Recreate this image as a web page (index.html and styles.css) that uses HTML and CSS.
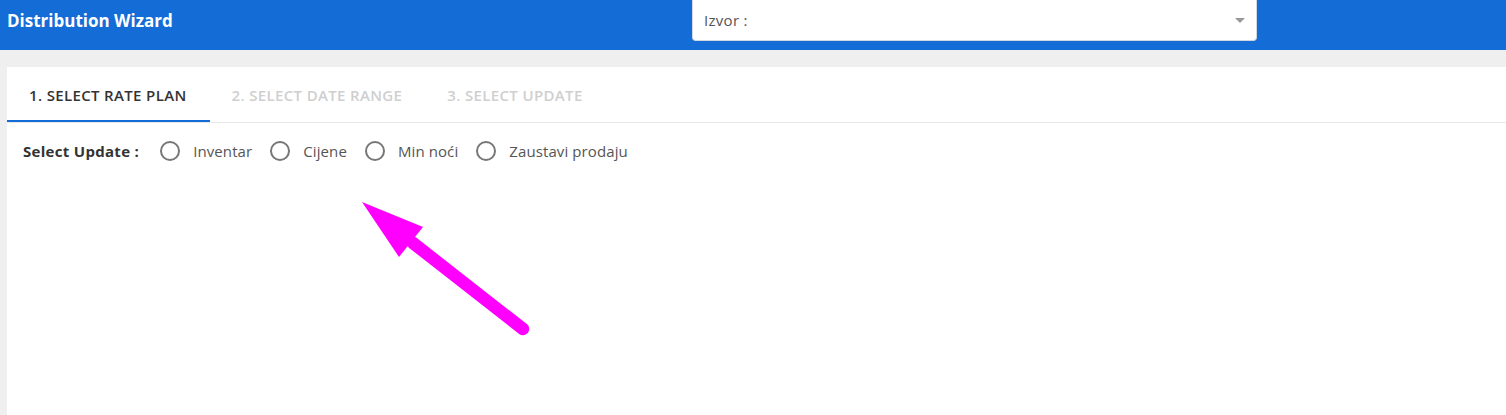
FILE: index.html
```html
<!DOCTYPE html>
<html lang="hr">
<head>
<meta charset="utf-8">
<title>Distribution Wizard</title>
<link rel="stylesheet" href="styles.css">
</head>
<body>
<header class="topbar">
  <div class="title">Distribution Wizard</div>
  <div class="select">
    <span class="select-label">Izvor :</span>
    <span class="caret"></span>
  </div>
</header>
<main class="page">
  <section class="card">
    <nav class="tabs">
      <div class="tab active">1. SELECT RATE PLAN</div>
      <div class="tab">2. SELECT DATE RANGE</div>
      <div class="tab">3. SELECT UPDATE</div>
    </nav>
    <div class="update-row">
      <span class="update-label">Select Update :</span>
      <label class="radio"><span class="circle"></span><span class="radio-text">Inventar</span></label>
      <label class="radio"><span class="circle"></span><span class="radio-text">Cijene</span></label>
      <label class="radio"><span class="circle"></span><span class="radio-text">Min noći</span></label>
      <label class="radio"><span class="circle"></span><span class="radio-text">Zaustavi prodaju</span></label>
    </div>
  </section>
</main>
<svg class="annotation" width="1506" height="415" viewBox="0 0 1506 415" aria-hidden="true">
  <line x1="413" y1="243" x2="523" y2="329" stroke="#ff00ff" stroke-width="12.5" stroke-linecap="round"/>
  <polygon points="362,202 423,227 399,257" fill="#ff00ff"/>
</svg>
</body>
</html>
```
FILE: styles.css
```css
html, body {
  margin: 0;
  padding: 0;
  height: 100%;
}
body {
  font-family: "Open Sans", "Noto Sans", sans-serif;
  background: #efefef;
  overflow: hidden;
  position: relative;
}
.topbar {
  height: 50px;
  background: #146cd7;
  display: grid;
  grid-template-columns: 692px 565px 1fr;
  align-items: start;
}
.title {
  color: #fff;
  font-weight: 700;
  font-size: 17px;
  line-height: 42px;
  padding-left: 7px;
}
.select {
  grid-column: 2;
  height: 40px;
  background: #fff;
  border: 1px solid #d3d8e0;
  border-top: 0;
  border-radius: 0 0 4px 4px;
  display: flex;
  align-items: center;
  justify-content: space-between;
  padding: 0 11px 0 11px;
  box-sizing: content-box;
  width: calc(565px - 22px - 2px);
}
.select-label {
  color: #555;
  font-size: 15px;
  letter-spacing: 0.3px;
}
.caret {
  width: 0;
  height: 0;
  border-left: 5px solid transparent;
  border-right: 5px solid transparent;
  border-top: 5px solid #999;
}
.page {
  padding: 17px 0 0 7px;
  height: calc(100% - 67px);
}
.card {
  background: #fff;
  height: 100%;
}
.tabs {
  display: flex;
  border-bottom: 1px solid #e8e8e8;
}
.tab {
  font-size: 15px;
  font-weight: 600;
  line-height: 20px;
  padding: 18px 23px 15px 22px;
  color: #cfcfcf;
  border-bottom: 2px solid transparent;
  letter-spacing: 0.35px;
}
.tab.active {
  color: #333;
  border-bottom-color: #146cd7;
}
.update-row {
  display: flex;
  align-items: center;
  padding: 18px 0 0 16px;
  font-size: 15px;
}
.update-label {
  font-weight: 700;
  color: #333;
  margin-right: 21px;
  letter-spacing: 0.3px;
}
.radio {
  display: flex;
  align-items: center;
  margin-right: 18px;
  color: #555;
}
.radio-text {
  letter-spacing: 0.1px;
}
.circle {
  width: 16px;
  height: 16px;
  border: 2px solid #777;
  border-radius: 50%;
  margin-right: 13px;
}
.annotation {
  position: absolute;
  left: 0;
  top: 0;
  pointer-events: none;
}
```
